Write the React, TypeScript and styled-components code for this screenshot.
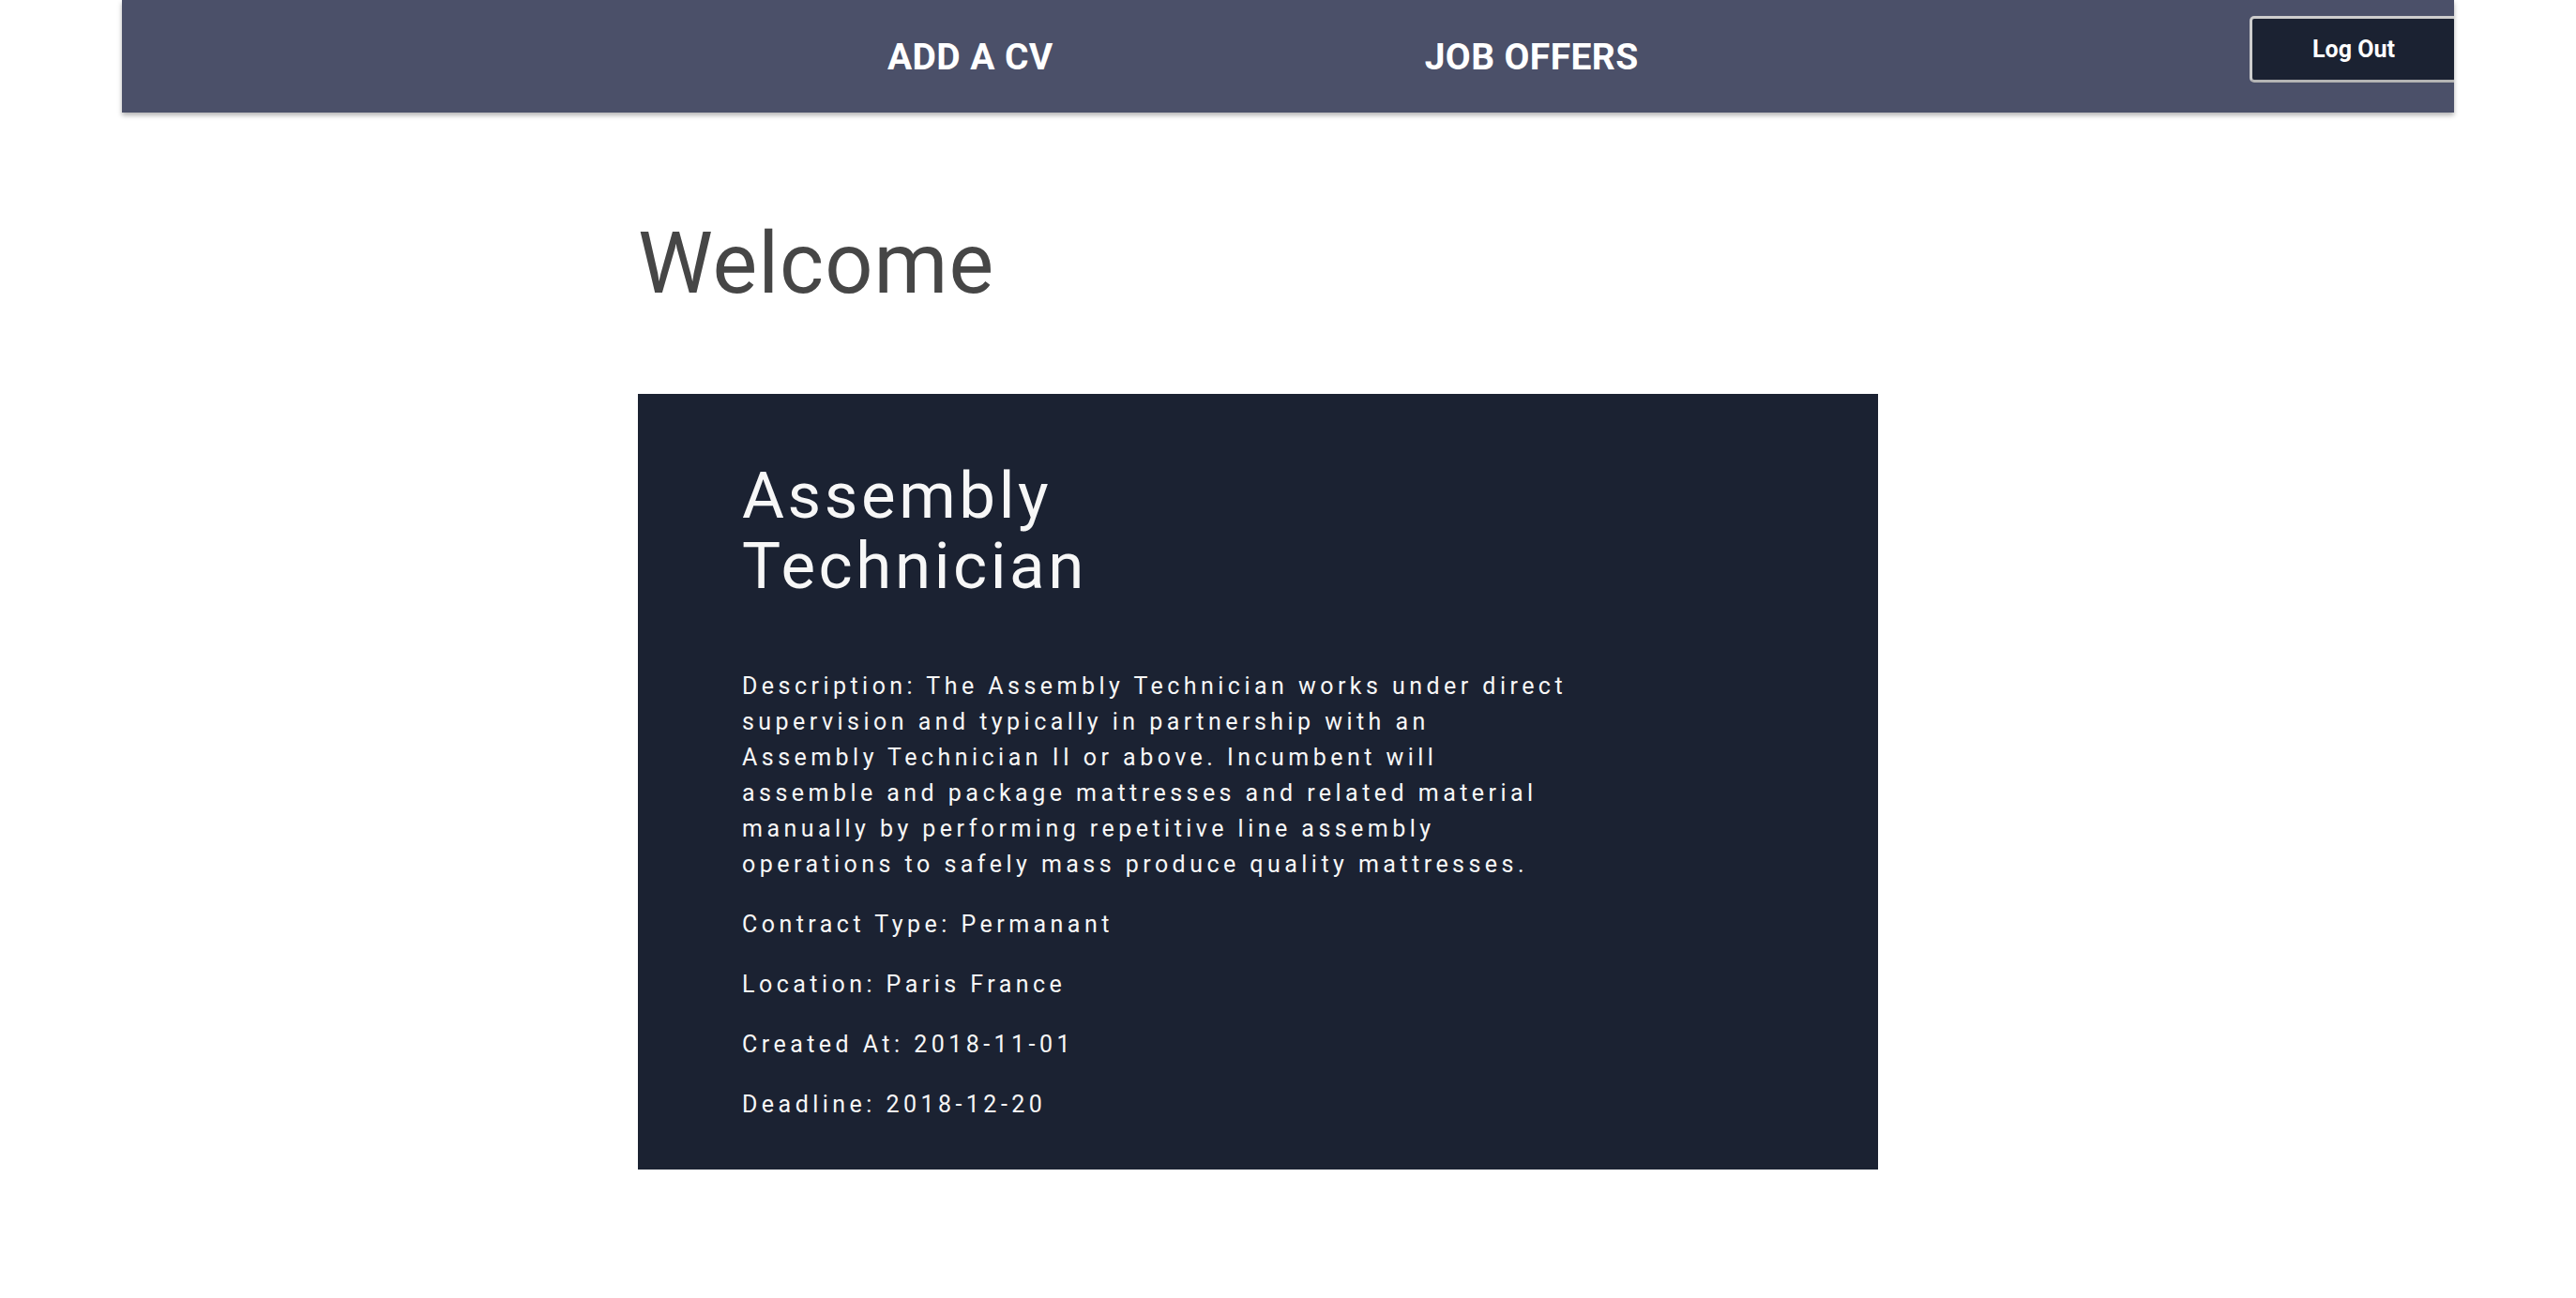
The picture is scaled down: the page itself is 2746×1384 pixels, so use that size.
import styled, { createGlobalStyle } from 'styled-components'

const GlobalStyle = createGlobalStyle`
  body {
    margin: 0;
    background: #ffffff;
    font-family: Roboto, "Liberation Sans", sans-serif;
  }
`

const job = {
  title: 'Assembly Technician',
  description:
    'The Assembly Technician works under direct supervision and typically in partnership with an Assembly Technician II or above. Incumbent will assemble and package mattresses and related material manually by performing repetitive line assembly operations to safely mass produce quality mattresses.',
  contractType: 'Permanant',
  location: 'Paris France',
  createdAt: '2018-11-01',
  deadline: '2018-12-20',
}

const App = () => {
  return (
    <>
      <GlobalStyle />
      <NavBar>
        <NavLinks>
          <NavLink>ADD A CV</NavLink>
          <NavLink>JOB OFFERS</NavLink>
        </NavLinks>
        <LogOutButton>Log Out</LogOutButton>
      </NavBar>

      <Main>
        <Welcome>Welcome</Welcome>

        <JobCard>
          <JobTitle>{job.title}</JobTitle>
          <Detail>Description: {job.description}</Detail>
          <Detail>Contract Type: {job.contractType}</Detail>
          <Detail>Location: {job.location}</Detail>
          <Detail>Created At: {job.createdAt}</Detail>
          <Detail>Deadline: {job.deadline}</Detail>
        </JobCard>
      </Main>
    </>
  )
}

const NavBar = styled.nav`
  display: flex;
  align-items: center;
  width: 2486px;
  height: 120px;
  margin-left: 130px;
  background: #4b5069;
  box-shadow: 0 3px 5px rgba(0, 0, 0, 0.3);
  overflow: hidden;
  position: relative;
`

const NavLinks = styled.div`
  display: flex;
  gap: 396px;
  margin-left: 816px;
  padding-top: 2px;
`

const NavLink = styled.a`
  color: #ffffff;
  font-size: 39px;
  font-weight: 700;
  letter-spacing: 0.4px;
  cursor: pointer;
`

const LogOutButton = styled.button`
  align-self: flex-start;
  margin-left: auto;
  margin-top: 17px;
  margin-right: -4px;
  width: 222px;
  height: 71px;
  background: #1b2232;
  color: #ffffff;
  font-family: Roboto, "Liberation Sans", sans-serif;
  font-size: 25px;
  font-weight: 700;
  border: 3px solid #cdcdcd;
  border-bottom-color: #b4b4b4;
  border-radius: 5px;
  cursor: pointer;
`

const Main = styled.main`
  display: flex;
  flex-direction: column;
  align-items: flex-start;
  padding-left: 680px;
  padding-bottom: 137px;
`

const Welcome = styled.h1`
  margin: 108px 0 84px 0;
  color: #464646;
  font-size: 90px;
  font-weight: 400;
  line-height: 108px;
  letter-spacing: 1px;
`

const JobCard = styled.section`
  box-sizing: border-box;
  width: 1322px;
  padding: 71px 0 50px 111px;
  background: #1b2232;
  color: #f7f7f7;
`

const JobTitle = styled.h2`
  max-width: 560px;
  margin: 0 0 72px 0;
  font-size: 69px;
  font-weight: 400;
  line-height: 75px;
  letter-spacing: 3.6px;
`

const Detail = styled.p`
  max-width: 884px;
  margin: 0 0 26px 0;
  font-size: 25px;
  line-height: 38px;
  letter-spacing: 4.46px;

  &:last-child {
    margin-bottom: 0;
  }
`

export default App
